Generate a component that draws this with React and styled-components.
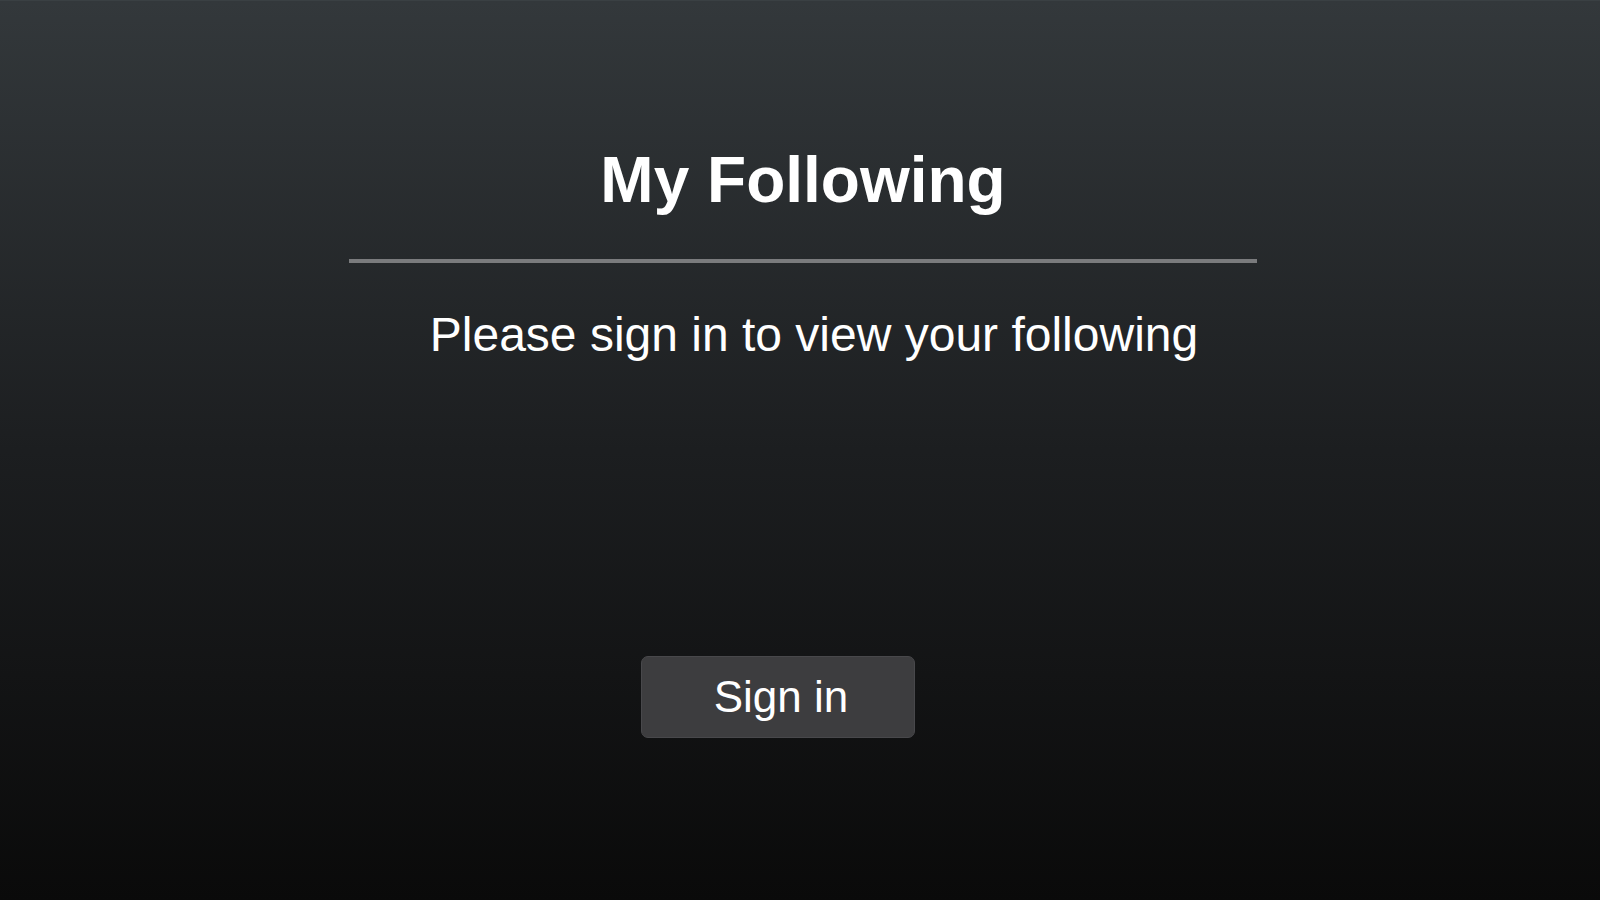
import React from 'react';
import styled, { createGlobalStyle } from 'styled-components';

const GlobalStyle = createGlobalStyle`
  html, body {
    margin: 0;
    padding: 0;
    height: 100%;
  }
  body {
    font-family: "Liberation Sans", Arial, sans-serif;
    background: #0b0b0b;
  }
`;

const Page = styled.div`
  min-height: 100vh;
  width: 100vw;
  box-sizing: border-box;
  border-top: 1px solid #3a4043;
  background: linear-gradient(180deg, #33383b 0%, #1c1e20 50%, #0a0a0a 100%);
  display: flex;
  flex-direction: column;
  align-items: center;
  padding-top: 134px;
  padding-left: 6px;
`;

const Content = styled.div`
  width: 908px;
  display: flex;
  flex-direction: column;
  align-items: center;
`;

const Title = styled.h1`
  margin: 0;
  color: #fff;
  font-size: 64px;
  font-weight: bold;
  line-height: 90px;
  text-align: center;
`;

const Divider = styled.hr`
  width: 100%;
  height: 4px;
  margin: 34px 0 0 0;
  border: none;
  background: #7a7b7d;
`;

const Message = styled.p`
  margin: 42px 0 0 0;
  padding-left: 22px;
  color: #fff;
  font-size: 48px;
  line-height: 60px;
  text-align: center;
`;

const SignInButton = styled.button`
  margin-top: 291px;
  margin-right: 50px;
  width: 274px;
  height: 82px;
  border: 1px solid #48484b;
  border-radius: 7px;
  background: #3d3d3f;
  color: #fff;
  font-family: "Liberation Sans", Arial, sans-serif;
  font-size: 44px;
  cursor: pointer;
  padding: 0 0 0 6px;
`;

const App = () => (
  <>
    <GlobalStyle />
    <Page>
      <Content>
        <Title>My Following</Title>
        <Divider />
        <Message>Please sign in to view your following</Message>
        <SignInButton type="button">Sign in</SignInButton>
      </Content>
    </Page>
  </>
);

export default App;
